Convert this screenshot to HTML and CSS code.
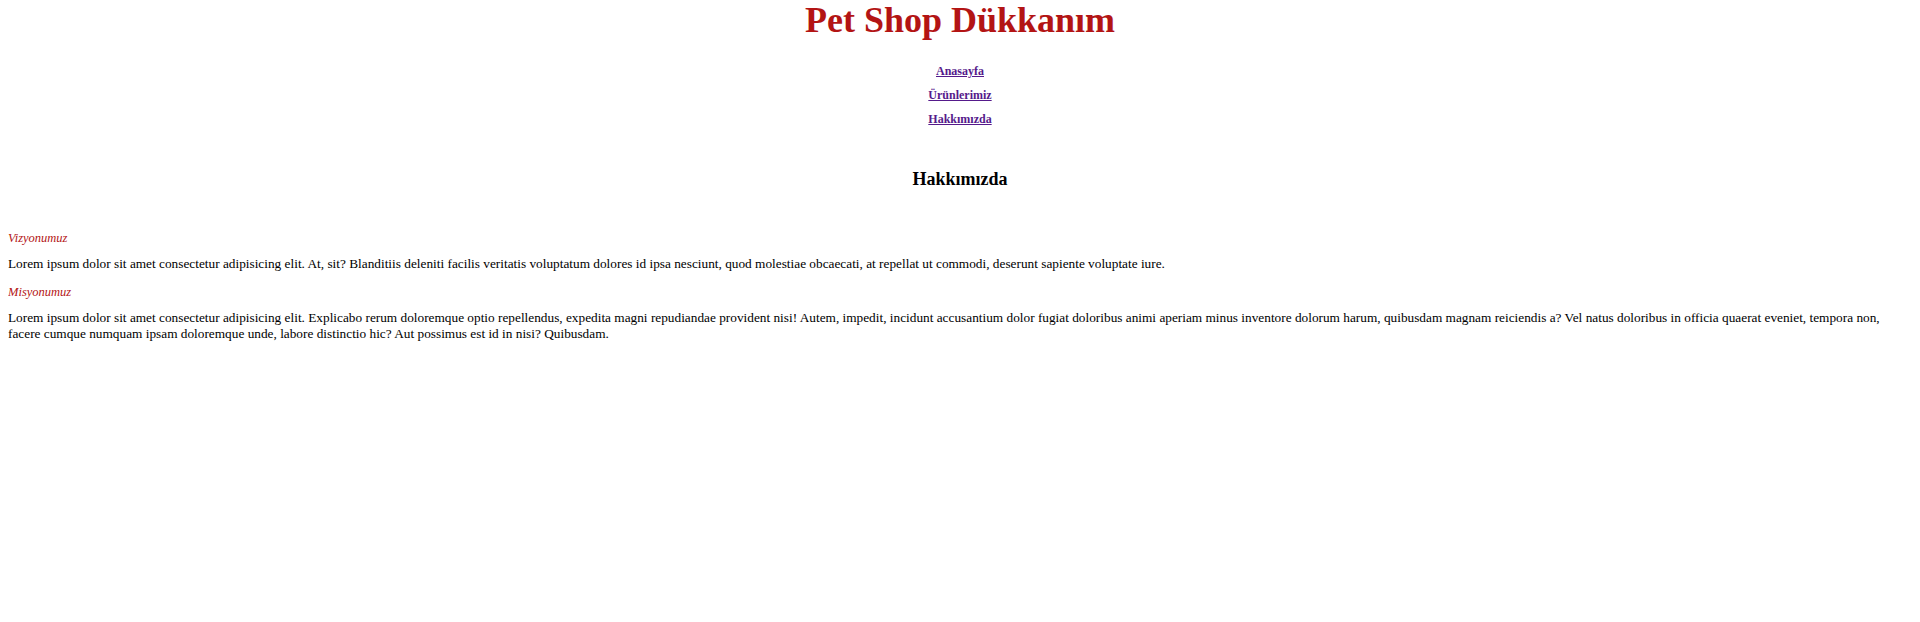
FILE: index.html
```html
<!DOCTYPE html>
<html lang="tr">
<head>
<meta charset="utf-8">
<title>Pet Shop Dükkanım - Hakkımızda</title>
<link rel="stylesheet" href="styles.css">
</head>
<body>
<header class="site-header">
  <h1 class="site-title">Pet Shop Dükkanım</h1>
  <nav class="site-nav">
    <ul class="nav-list">
      <li class="nav-item"><a class="nav-link" href="#">Anasayfa</a></li>
      <li class="nav-item"><a class="nav-link" href="#">Ürünlerimiz</a></li>
      <li class="nav-item"><a class="nav-link" href="#">Hakkımızda</a></li>
    </ul>
  </nav>
</header>
<main class="content">
  <h3 class="page-title">Hakkımızda</h3>
  <section class="block">
    <h5 class="block-title">Vizyonumuz</h5>
    <p class="block-text">Lorem ipsum dolor sit amet consectetur adipisicing elit. At, sit? Blanditiis deleniti facilis veritatis voluptatum dolores id ipsa nesciunt, quod molestiae obcaecati, at repellat ut commodi, deserunt sapiente voluptate iure.</p>
  </section>
  <section class="block">
    <h5 class="block-title">Misyonumuz</h5>
    <p class="block-text">Lorem ipsum dolor sit amet consectetur adipisicing elit. Explicabo rerum doloremque optio repellendus, expedita magni repudiandae provident nisi! Autem, impedit, incidunt accusantium dolor fugiat doloribus animi aperiam minus inventore dolorum harum, quibusdam magnam reiciendis a? Vel natus doloribus in officia quaerat eveniet, tempora non, facere cumque numquam ipsam doloremque unde, labore distinctio hic? Aut possimus est id in nisi? Quibusdam.</p>
  </section>
</main>
</body>
</html>
```

FILE: styles.css
```css
body {
  margin: 0 8px;
  font-family: "Liberation Serif", "Times New Roman", serif;
  color: #000;
  background: #fff;
}

.site-title {
  margin: 0;
  text-align: center;
  font-size: 36px;
  line-height: 40px;
  font-weight: bold;
  color: #b31414;
}

.nav-list {
  list-style: none;
  margin: 19px 0 0;
  padding: 0;
  text-align: center;
}

.nav-item {
  font-size: 12px;
  font-weight: bold;
  line-height: 24px;
}

.nav-link {
  color: #551a8b;
}

.page-title {
  text-align: center;
  font-size: 18px;
  line-height: 20px;
  margin: 38px 0 42px;
}

.block-title {
  margin: 0 0 11px;
  font-size: 12.5px;
  line-height: 14px;
  font-style: italic;
  font-weight: normal;
  color: #b31414;
}

.block-text {
  margin: 0 0 12.5px;
  font-size: 13.3px;
  line-height: 16px;
}
```
